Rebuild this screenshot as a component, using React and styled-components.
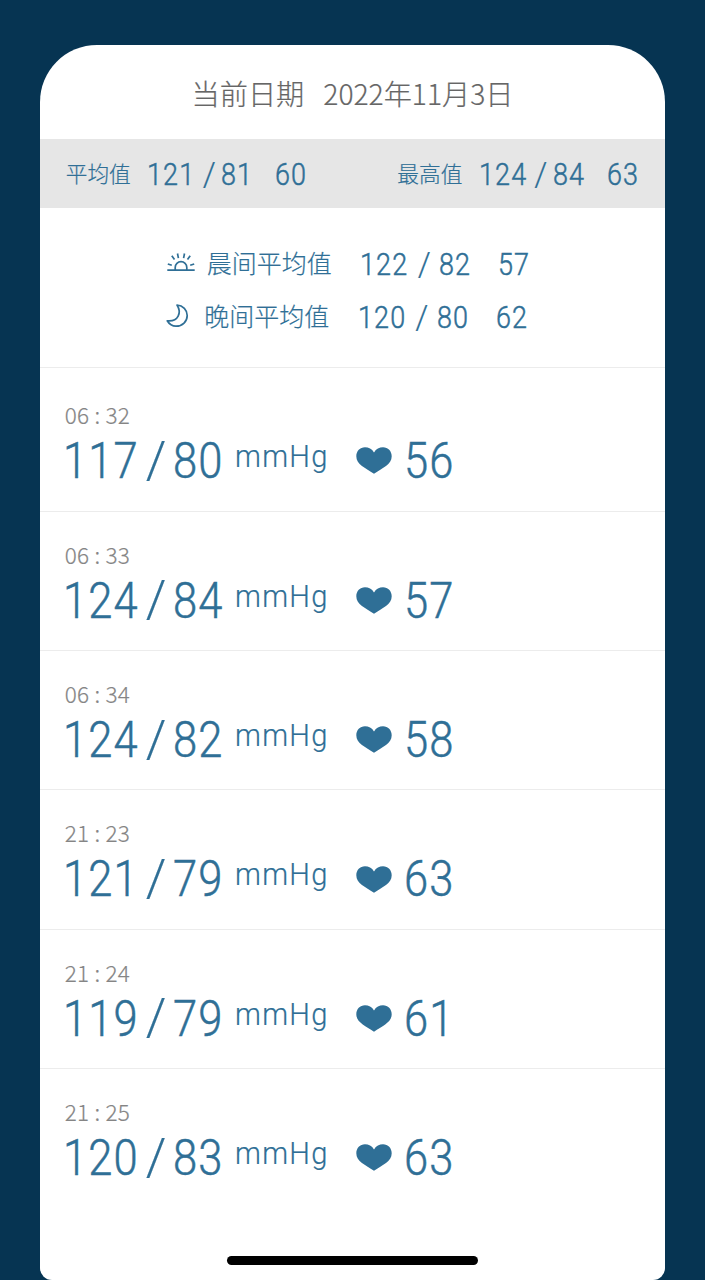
import React from "react";
import styled, { createGlobalStyle } from "styled-components";

const GlobalStyle = createGlobalStyle`
  * { box-sizing: border-box; }
  html, body { margin: 0; background: #fff; }
`;

const Screen = styled.main`
  width: 705px;
  height: 1280px;
  padding: 45.3px 39.7px 0 39.7px;
  background: #063452;
  font-family: "Noto Sans CJK SC", sans-serif;
  font-weight: 300;
  -webkit-text-stroke: 0.2px currentColor;
  color: #2f6f96;
  overflow: hidden;
  white-space: pre;
`;

const Card = styled.section`
  height: 1234.7px;
  display: flex;
  flex-direction: column;
  background: #fff;
  border-radius: 57px 57px 12px 12px;
  overflow: hidden;
`;

const DateHeader = styled.header`
  flex: none;
  height: 94px;
  display: flex;
  justify-content: center;
  gap: 19px;
  line-height: 96px;
  font-size: 28.2px;
  color: #666;
`;

const SummaryBar = styled.div`
  flex: none;
  height: 68.5px;
  display: flex;
  justify-content: space-between;
  padding: 0 26px;
  background: #e6e6e6;
`;

const Summary = styled.div`
  display: flex;
  align-items: center;
`;

const SummaryLabel = styled.span`
  width: ${(p) => p.$width}px;
  font-size: 21.7px;
  line-height: 66px;
  height: 68px;
`;

const NumCell = styled.span`
  flex: none;
  width: ${(p) => p.$width}px;
  padding-top: ${(p) => p.$drop || 0}px;
  font-family: Roboto, sans-serif;
  font-weight: 300;
  font-size: ${(p) => p.$size}px;
  line-height: 1.2;
  letter-spacing: ${(p) => p.$track}px;
`;

const Condensed = styled.span`
  display: inline-block;
  transform: scaleX(0.87);
  transform-origin: left;
  margin-left: ${(p) => p.$shift || 0}px;
  -webkit-text-stroke: 0.5px currentColor;
`;

const Averages = styled.div`
  flex: none;
  height: 160.2px;
  padding: 30px 0 0 126px;
  border-bottom: 1.5px solid #ececec;
`;

const AverageRow = styled.div`
  height: 53px;
  display: flex;
  align-items: center;
  margin-left: ${(p) => p.$shift || 0}px;
`;

const AverageIcon = styled.svg`
  flex: none;
  width: 30px;
  height: 28px;
  margin-right: 11px;
  fill: none;
  stroke: currentColor;
  stroke-width: 1.7;
  stroke-linejoin: round;
`;

const AverageLabel = styled.span`
  width: 153px;
  font-size: 25px;
  line-height: 49px;
  height: 53px;
`;

const Reading = styled.article`
  flex: none;
  height: ${(p) => (p.$first ? 143.7 : 139.3)}px;
  padding: ${(p) => (p.$first ? 31 : 27)}px 0 0 25px;
  border-bottom: ${(p) => (p.$last ? 0 : 1.5)}px solid #ececec;
`;

const Time = styled.time`
  display: block;
  height: 29px;
  line-height: 30px;
  font-size: 22.5px;
  color: #858585;
  letter-spacing: 0.2px;
  word-spacing: 0.1px;
`;

const Values = styled.div`
  height: 66px;
  display: flex;
  align-items: center;
`;

const Unit = styled.span`
  width: 121px;
  margin-top: -9px;
  font-family: Roboto, sans-serif;
  font-weight: 300;
  font-size: 31px;
  letter-spacing: 1.4px;
`;

const UnitText = styled.span`
  display: inline-block;
  transform: scaleX(0.94);
  transform-origin: left;
`;

const HeartIcon = styled.svg`
  width: 36px;
  height: 27px;
  margin-right: 12px;
  fill: currentColor;
`;

const HomeBar = styled.div`
  width: 251px;
  height: 9px;
  margin: auto auto 14.7px;
  border-radius: 5px;
  background: #000;
`;

function Num({ size, width, shift, drop, track = 1.3, children }) {
  return (
    <NumCell $size={size} $width={width} $drop={drop} $track={track}>
      <Condensed $shift={shift}>{children}</Condensed>
    </NumCell>
  );
}

function Slash({ size, width, drop }) {
  return (
    <NumCell $size={size} $width={width} $drop={drop} $track={0}>/</NumCell>
  );
}

function Pair({ sys, dia, pulse, widths, drop }) {
  return (
    <>
      <Num size={31} width={widths[0]} shift={0.3} drop={drop}>{sys}</Num>
      <Slash size={33} width={widths[1]} drop={drop} />
      <Num size={31} width={widths[2]} shift={1.7} drop={drop}>{dia}</Num>
      <Num size={31} width={widths[3]} shift={0.8} drop={drop}>{pulse}</Num>
    </>
  );
}

function Sunrise() {
  return (
    <AverageIcon viewBox="0 0 30 28">
      <path d="M1.3 20.2h27.4M9.2 20v-2.6a5.8 5.8 0 0 1 11.6 0v2.6M11.5 3.5l.9 4.6M18.5 3.5l-.9 4.6M5.8 5.7l2.7 3.8M24.2 5.7l-2.7 3.8M1.8 14l4 1.3M28.2 14l-4 1.3" />
    </AverageIcon>
  );
}

function Moon() {
  return (
    <AverageIcon viewBox="0 0 30 28">
      <path d="M14 2C18.8 9.5 15.5 19 4.2 17.8C6.3 21.3 9.5 23.2 13 23.2C19.5 23.2 24.2 18.5 24.2 12.5C24.2 7 20 2.5 14 2Z" />
    </AverageIcon>
  );
}

const readings = [
  ["06 : 32", 117, 80, 56],
  ["06 : 33", 124, 84, 57],
  ["06 : 34", 124, 82, 58],
  ["21 : 23", 121, 79, 63],
  ["21 : 24", 119, 79, 61],
  ["21 : 25", 120, 83, 63],
];

export default function App() {
  return (
    <>
      <GlobalStyle />
      <Screen>
        <Card>
          <DateHeader>
            <span>当前日期</span>
            <span>2022年11月3日</span>
          </DateHeader>
          <SummaryBar>
            <Summary>
              <SummaryLabel $width={81}>平均值</SummaryLabel>
              <Pair sys={121} dia={81} pulse={60} widths={[56, 17, 55, 33]} drop={2} />
            </Summary>
            <Summary>
              <SummaryLabel $width={81}>最高值</SummaryLabel>
              <Pair sys={124} dia={84} pulse={63} widths={[56, 17, 55, 33]} drop={2} />
            </Summary>
          </SummaryBar>
          <Averages>
            <AverageRow>
              <Sunrise />
              <AverageLabel>晨间平均值</AverageLabel>
              <Pair sys={122} dia={82} pulse={57} widths={[58, 20, 60, 33]} drop={1} />
            </AverageRow>
            <AverageRow $shift={-2.4}>
              <Moon />
              <AverageLabel>晚间平均值</AverageLabel>
              <Pair sys={120} dia={80} pulse={62} widths={[58, 20, 60, 33]} drop={1} />
            </AverageRow>
          </Averages>
          {readings.map(([time, sys, dia, pulse], i) => (
            <Reading key={time} $first={i === 0} $last={i === readings.length - 1}>
              <Time>{time}</Time>
              <Values>
                <Num size={50} width={81} shift={-1.7}>{sys}</Num>
                <Slash size={52} width={27} />
                <Num size={50} width={62} shift={0.3}>{dia}</Num>
                <Unit><UnitText>mmHg</UnitText></Unit>
                <HeartIcon viewBox="0 0 36 27">
                  <path d="M18 5.4C20 1.8 23.5 .2 27 .2C32 .2 35.7 4 35.7 9.2C35.7 17.5 26.5 20.8 18 26.8C9.5 20.8 .3 17.5 .3 9.2C.3 4 4 .2 9 .2C12.5 .2 16 1.8 18 5.4Z" />
                </HeartIcon>
                <Num size={50} width={60}>{pulse}</Num>
              </Values>
            </Reading>
          ))}
          <HomeBar />
        </Card>
      </Screen>
    </>
  );
}
